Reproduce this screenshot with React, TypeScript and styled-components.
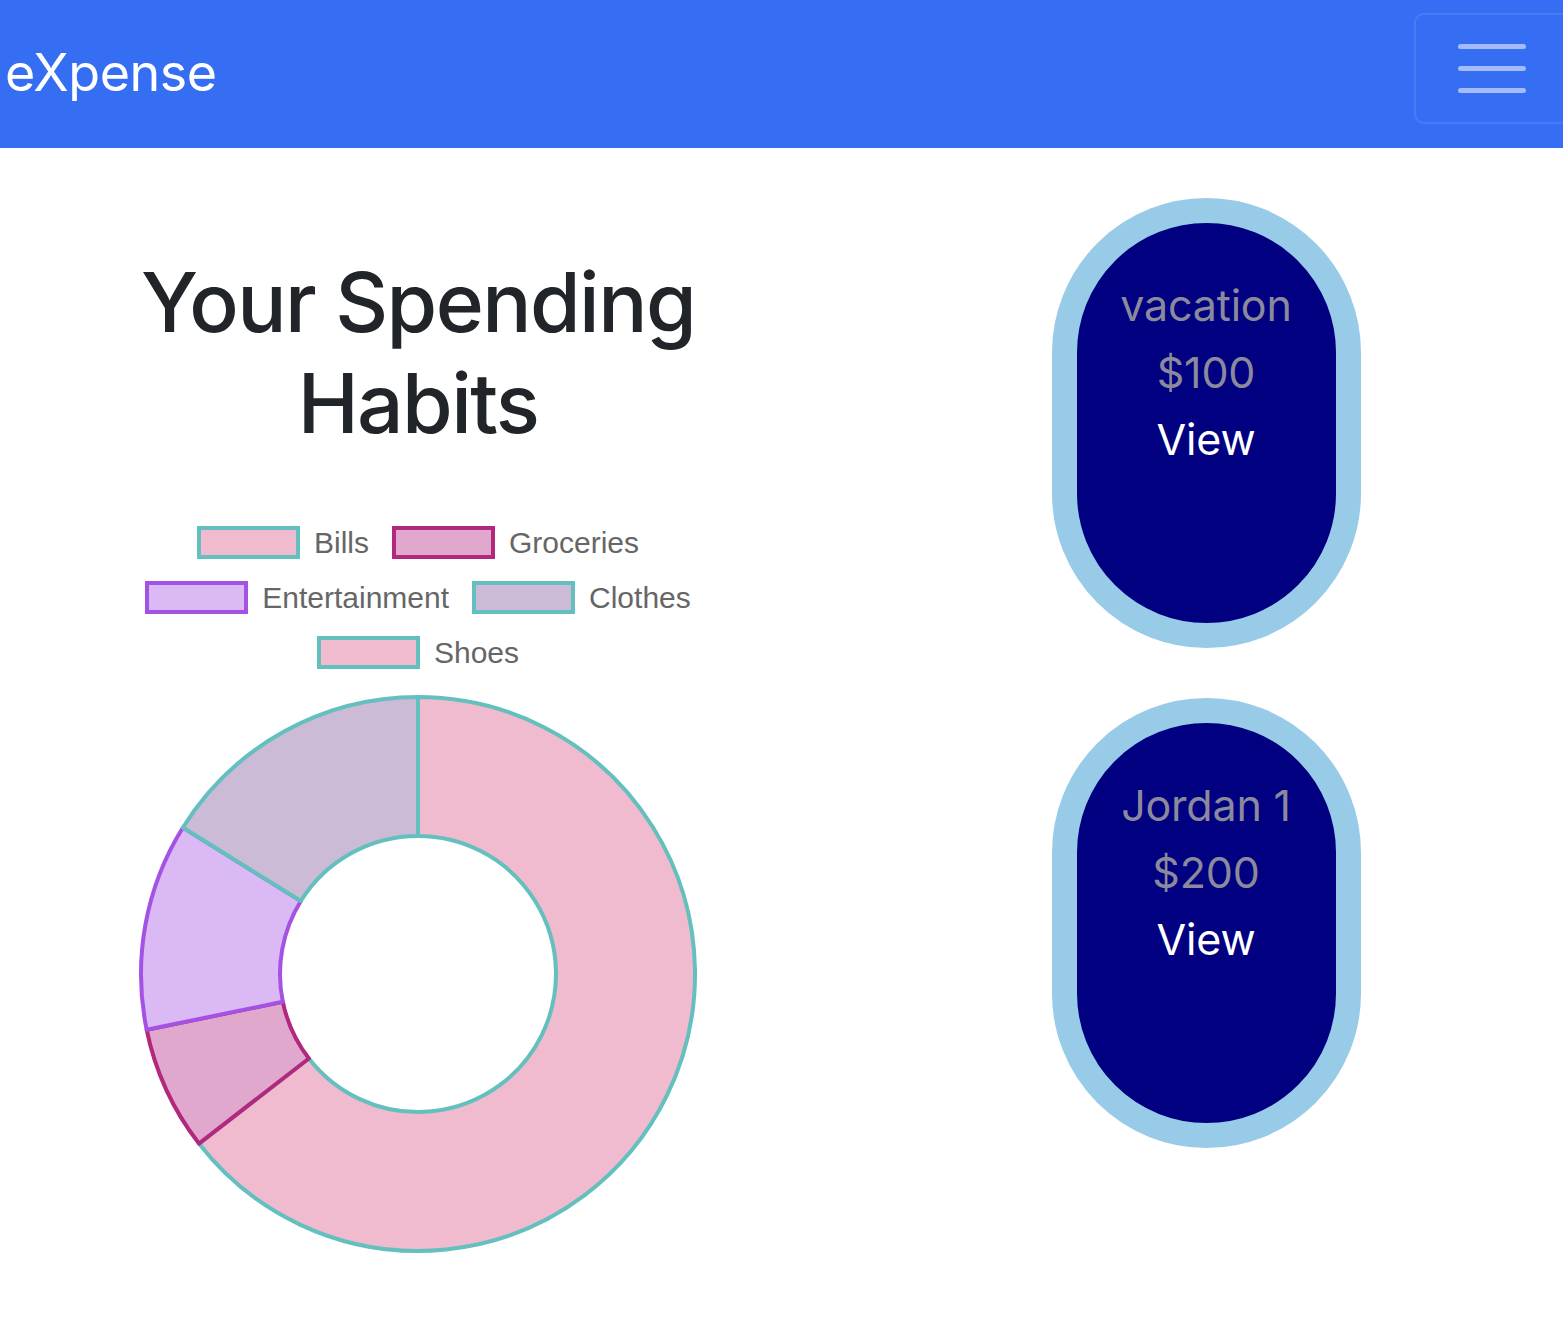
import React from "react";
import styled, { createGlobalStyle } from "styled-components";

const GlobalStyle = createGlobalStyle`
  html, body {
    margin: 0;
    padding: 0;
    background: #ffffff;
    overflow-x: hidden;
  }
  body {
    font-family: Inter, "Liberation Sans", sans-serif;
    color: #212529;
  }
`;

const NavBar = styled.nav`
  height: 148px;
  background: #356ef3;
  display: flex;
  align-items: center;
  justify-content: space-between;
  padding-left: 5px;
`;

const Brand = styled.a`
  color: #ffffff;
  font-size: 52px;
  font-weight: 400;
  letter-spacing: -0.5px;
  text-decoration: none;
  margin-top: -4px;
`;

const Toggler = styled.button`
  width: 156px;
  height: 111px;
  margin-right: -7px;
  margin-top: -11px;
  border: 2px solid rgba(255, 255, 255, 0.1);
  border-radius: 10px;
  background: transparent;
  display: flex;
  flex-direction: column;
  align-items: center;
  justify-content: center;
  gap: 17px;
  padding: 0;
`;

const TogglerBar = styled.span`
  display: block;
  width: 68px;
  height: 5px;
  border-radius: 3px;
  background: rgba(255, 255, 255, 0.55);
`;

const Main = styled.main`
  display: grid;
  grid-template-columns: 836px 1fr;
`;

const ChartColumn = styled.section`
  display: flex;
  flex-direction: column;
  align-items: center;
  padding-top: 104px;
`;

const Title = styled.h1`
  margin: 0;
  font-size: 82px;
  font-weight: 500;
  line-height: 101px;
  letter-spacing: -1.6px;
  text-align: center;
  width: 600px;
`;

const Legend = styled.ul`
  list-style: none;
  margin: 72px 0 0;
  padding: 0;
  width: 620px;
  display: flex;
  flex-wrap: wrap;
  justify-content: center;
  column-gap: 23px;
  row-gap: 22px;
`;

const LegendItem = styled.li`
  display: flex;
  align-items: center;
  gap: 14px;
  height: 33px;
  font-family: "Liberation Sans", Arial, sans-serif;
  font-size: 30px;
  color: #666666;
`;

const Swatch = styled.span<{ $fill: string; $stroke: string }>`
  display: block;
  box-sizing: border-box;
  width: 103px;
  height: 33px;
  background: ${(p) => p.$fill};
  border: 4px solid ${(p) => p.$stroke};
`;

const Donut = styled.svg`
  display: block;
  margin-top: 24px;
`;

const GoalColumn = styled.section`
  display: flex;
  flex-direction: column;
  align-items: center;
  padding: 50px 0 0 13px;
  gap: 50px;
`;

const GoalPill = styled.div`
  box-sizing: border-box;
  width: 309px;
  height: 450px;
  border: 25px solid #98cbe8;
  border-radius: 155px;
  background: #000080;
  display: flex;
  flex-direction: column;
  align-items: center;
  padding-top: 49px;
`;

const GoalLine = styled.div<{ $light?: boolean }>`
  font-size: 43px;
  line-height: 67px;
  letter-spacing: -0.2px;
  color: ${(p) => (p.$light ? "#ffffff" : "#8a8a9c")};
`;

type Slice = { label: string; value: number; fill: string; stroke: string };

const slices: Slice[] = [
  { label: "Bills", value: 400, fill: "#f0bbce", stroke: "#64bfbf" },
  { label: "Groceries", value: 45, fill: "#e0a8cc", stroke: "#b3287f" },
  { label: "Entertainment", value: 75, fill: "#dbb9f5", stroke: "#a452e3" },
  { label: "Clothes", value: 100, fill: "#cbbbd7", stroke: "#64bfbf" },
  { label: "Shoes", value: 0, fill: "#f0bbce", stroke: "#64bfbf" },
];

const goals = [
  { name: "vacation", amount: "$100" },
  { name: "Jordan 1", amount: "$200" },
];

const SIZE = 562;
const C = SIZE / 2;
const R_OUT = 277;
const R_IN = 138;

function arcPath(a0: number, a1: number) {
  const pt = (r: number, a: number) => {
    const t = ((a - 90) * Math.PI) / 180;
    return `${(C + r * Math.cos(t)).toFixed(2)} ${(C + r * Math.sin(t)).toFixed(2)}`;
  };
  const large = a1 - a0 > 180 ? 1 : 0;
  return [
    `M ${pt(R_OUT, a0)}`,
    `A ${R_OUT} ${R_OUT} 0 ${large} 1 ${pt(R_OUT, a1)}`,
    `L ${pt(R_IN, a1)}`,
    `A ${R_IN} ${R_IN} 0 ${large} 0 ${pt(R_IN, a0)}`,
    "Z",
  ].join(" ");
}

function SpendingChart() {
  const total = slices.reduce((s, x) => s + x.value, 0);
  let start = 0;
  const arcs = slices
    .filter((s) => s.value > 0)
    .map((s) => {
      const sweep = (s.value / total) * 360;
      const d = arcPath(start, start + sweep);
      start += sweep;
      return <path key={s.label} d={d} fill={s.fill} stroke={s.stroke} strokeWidth={4} strokeLinejoin="round" />;
    });
  return (
    <Donut width={SIZE} height={SIZE} viewBox={`0 0 ${SIZE} ${SIZE}`}>
      {arcs}
    </Donut>
  );
}

export default function App() {
  return (
    <>
      <GlobalStyle />
      <NavBar>
        <Brand href="#">eXpense</Brand>
        <Toggler aria-label="Toggle navigation">
          <TogglerBar />
          <TogglerBar />
          <TogglerBar />
        </Toggler>
      </NavBar>
      <Main>
        <ChartColumn>
          <Title>Your Spending Habits</Title>
          <Legend>
            {slices.map((s) => (
              <LegendItem key={s.label}>
                <Swatch $fill={s.fill} $stroke={s.stroke} />
                {s.label}
              </LegendItem>
            ))}
          </Legend>
          <SpendingChart />
        </ChartColumn>
        <GoalColumn>
          {goals.map((g) => (
            <GoalPill key={g.name}>
              <GoalLine>{g.name}</GoalLine>
              <GoalLine>{g.amount}</GoalLine>
              <GoalLine $light>View</GoalLine>
            </GoalPill>
          ))}
        </GoalColumn>
      </Main>
    </>
  );
}
